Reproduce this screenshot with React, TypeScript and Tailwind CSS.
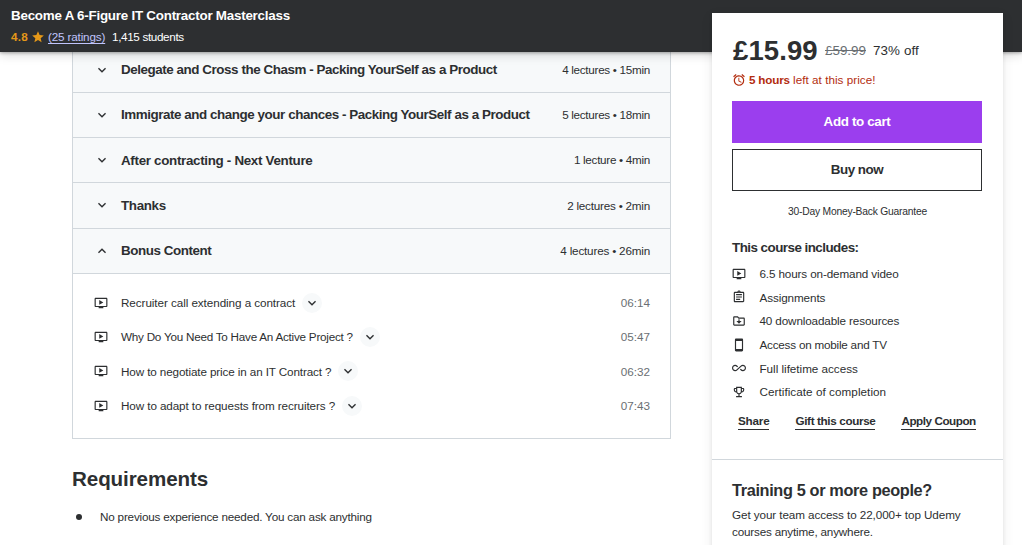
import React from "react";
import {
	MdAlarm,
	MdAllInclusive,
	MdExpandLess,
	MdExpandMore,
	MdOutlineAssignment,
	MdOutlineEmojiEvents,
	MdOutlineOndemandVideo,
	MdOutlineSmartphone,
	MdStar,
} from "react-icons/md";

interface Section {
	title: string;
	meta: string;
	titleSpacing: string;
	metaSpacing: string;
	open?: boolean;
}

const sections: Section[] = [
	{
		title: "Delegate and Cross the Chasm - Packing YourSelf as a Product",
		meta: "4 lectures • 15min",
		titleSpacing: "tracking-[-0.44px]",
		metaSpacing: "tracking-[-0.29px]",
	},
	{
		title: "Immigrate and change your chances - Packing YourSelf as a Product",
		meta: "5 lectures • 18min",
		titleSpacing: "tracking-[-0.44px]",
		metaSpacing: "tracking-[-0.29px]",
	},
	{
		title: "After contracting - Next Venture",
		meta: "1 lecture • 4min",
		titleSpacing: "tracking-[-0.32px]",
		metaSpacing: "tracking-[-0.29px]",
	},
	{
		title: "Thanks",
		meta: "2 lectures • 2min",
		titleSpacing: "tracking-[-0.35px]",
		metaSpacing: "tracking-[-0.22px]",
	},
	{
		title: "Bonus Content",
		meta: "4 lectures • 26min",
		titleSpacing: "tracking-[-0.43px]",
		metaSpacing: "tracking-[-0.19px]",
		open: true,
	},
];

const lessons = [
	{
		title: "Recruiter call extending a contract",
		time: "06:14",
		spacing: "tracking-[-0.07px]",
	},
	{
		title: "Why Do You Need To Have An Active Project ?",
		time: "05:47",
		spacing: "tracking-[-0.24px]",
	},
	{
		title: "How to negotiate price in an IT Contract ?",
		time: "06:32",
		spacing: "tracking-[-0.12px]",
	},
	{
		title: "How to adapt to requests from recruiters ?",
		time: "07:43",
		spacing: "tracking-[-0.1px]",
	},
];

const FolderDownload: React.FC<{ className?: string }> = ({ className }) => (
	<svg viewBox="0 0 24 24" fill="currentColor" className={className}>
		<path d="M20 6h-8l-2-2H4c-1.1 0-2 .9-2 2v12c0 1.1.9 2 2 2h16c1.1 0 2-.9 2-2V8c0-1.1-.9-2-2-2zm0 12H4V6h5.200l2 2H20v10zM11 9h2v3h3.500L12 16.500 7.500 12H11z" />
	</svg>
);

const includes = [
	{
		icon: MdOutlineOndemandVideo,
		label: "6.5 hours on-demand video",
		spacing: "tracking-[-0.13px]",
	},
	{
		icon: MdOutlineAssignment,
		label: "Assignments",
		spacing: "tracking-[-0.1px]",
	},
	{
		icon: FolderDownload,
		label: "40 downloadable resources",
		spacing: "tracking-[-0.13px]",
	},
	{
		icon: MdOutlineSmartphone,
		label: "Access on mobile and TV",
		spacing: "tracking-[-0.22px]",
	},
	{
		icon: MdAllInclusive,
		label: "Full lifetime access",
		spacing: "tracking-[-0.02px]",
	},
	{
		icon: MdOutlineEmojiEvents,
		label: "Certificate of completion",
		spacing: "tracking-[0.05px]",
	},
];

const Header: React.FC = () => (
	<header className="relative z-10 h-[52px] bg-[#2d2f31] pl-[11px] shadow-[0_1px_3px_rgba(0,0,0,0.3),0_3px_10px_rgba(0,0,0,0.15)]">
		<h1 className="pt-[7px] text-[13.4px] leading-[18px] font-bold tracking-[-0.24px] text-white">
			Become A 6-Figure IT Contractor Masterclass
		</h1>
		<div className="mt-[3px] flex h-[18px] items-center text-[11.7px] text-white">
			<span className="w-[20px] font-bold tracking-[0.2px] text-[#e59819]">4.8</span>
			<MdStar className="h-[14px] w-[14px] text-[#e59819]" />
			<a className="ml-[3px] w-[64px] tracking-[-0.16px] text-[#c0c4fc] underline underline-offset-2">
				(25 ratings)
			</a>
			<span className="tracking-[-0.35px]">1,415 students</span>
		</div>
	</header>
);

const Curriculum: React.FC = () => (
	<div className="-mt-[4.5px] border border-t-0 border-[#d1d7dc]">
		{sections.map((section) => {
			const Arrow = section.open ? MdExpandLess : MdExpandMore;
			return (
				<div
					key={section.title}
					className="flex h-[45.25px] items-center border-b border-[#d1d7dc] bg-[#f7f9fa] pr-[20px] pl-[21px]"
				>
					<Arrow className="h-4 w-4" />
					<h3
						className={`ml-[11px] flex-1 pt-[1px] text-[13.4px] font-bold whitespace-nowrap ${section.titleSpacing}`}
					>
						{section.title}
					</h3>
					<span className={`text-[11.7px] ${section.metaSpacing}`}>{section.meta}</span>
				</div>
			);
		})}
		<ul className="pt-[12px] pr-[20px] pb-[15px] pl-[20px]">
			{lessons.map((lesson) => (
				<li key={lesson.title} className="flex h-[34.3px] items-center text-[11.7px]">
					<MdOutlineOndemandVideo className="ml-[0.5px] h-[14px] w-[14px]" />
					<span className={`ml-[13.5px] ${lesson.spacing}`}>{lesson.title}</span>
					<span className="ml-[7px] flex h-[20px] w-[20px] items-center justify-center rounded-full bg-[#f7f9fa]">
						<MdExpandMore className="h-4 w-4" />
					</span>
					<span className="ml-auto text-[#6a6f73]">{lesson.time}</span>
				</li>
			))}
		</ul>
	</div>
);

const Sidebar: React.FC = () => (
	<aside className="relative z-20 -mt-[39px] ml-[41px] h-[560px] w-[291px] bg-white shadow-[0_2px_4px_rgba(0,0,0,0.08),0_4px_12px_rgba(0,0,0,0.08)]">
		<div className="h-[447px] border-b border-[#d1d7dc] px-[20px] pt-[22px]">
			<div className="flex h-[32px] items-center">
				<span className="w-[93px] pl-[1px] text-[27.5px] font-bold tracking-[0.1px]">
					£15.99
				</span>
				<span className="w-[48px] text-[13.4px] text-[#6a6f73] line-through">
					£59.99
				</span>
				<span className="text-[13.4px] tracking-[0.1px]">73% off</span>
			</div>
			<div className="mt-[3px] flex h-[20px] items-center text-[11.7px] text-[#b32d0f]">
				<MdAlarm className="mr-[3px] h-[14px] w-[14px]" />
				<span className="tracking-[0.03px]">
					<b className="tracking-[-0.2px]">5 hours</b> left at this price!
				</span>
			</div>
			<button className="mt-[11px] h-[42px] w-[250px] bg-[#9b3eee] pt-[1px] text-[13.4px] font-bold tracking-[-0.35px] text-white">
				Add to cart
			</button>
			<button className="mt-[6px] h-[42px] w-[250px] border border-[#2d2f31] pt-[1px] text-[13.4px] font-bold tracking-[-0.5px]">
				Buy now
			</button>
			<p className="mt-[13px] text-center text-[10.3px] leading-[16px] tracking-[-0.22px]">
				30-Day Money-Back Guarantee
			</p>
			<h2 className="mt-[19px] text-[13.4px] leading-[18px] font-bold tracking-[-0.53px]">
				This course includes:
			</h2>
			<ul className="mt-[5px]">
				{includes.map(({ icon: Icon, label, spacing }) => (
					<li key={label} className="flex h-[23.67px] items-center text-[11.7px]">
						<Icon className="h-[14px] w-[14px]" />
						<span className={`ml-[13.5px] ${spacing}`}>{label}</span>
					</li>
				))}
			</ul>
			<div className="mt-[9px] flex gap-[26px] pl-[6px] text-[11.7px] leading-[16px] font-bold whitespace-nowrap">
				<a className="border-b border-[#2d2f31] tracking-[-0.2px]">Share</a>
				<a className="border-b border-[#2d2f31] tracking-[-0.36px]">Gift this course</a>
				<a className="border-b border-[#2d2f31] tracking-[-0.46px]">Apply Coupon</a>
			</div>
		</div>
		<div className="px-[20px] pt-[20px]">
			<h2 className="text-[16.3px] leading-[20px] font-bold tracking-[-0.35px]">
				Training 5 or more people?
			</h2>
			<p className="mt-[6px] text-[11.7px] leading-[17px] tracking-[-0.09px]">
				Get your team access to 22,000+ top Udemy
				<br />
				<span className="tracking-[-0.18px]">courses anytime, anywhere.</span>
			</p>
		</div>
	</aside>
);

export default function App() {
	return (
		<div className="h-[545px] w-[1022px] overflow-hidden bg-white font-['Liberation_Sans',Arial,sans-serif] text-[#2d2f31]">
			<Header />
			<div className="flex items-start">
				<main className="ml-[72px] w-[599px]">
					<Curriculum />
					<h2 className="mt-[27px] text-[20.6px] leading-[26px] font-bold tracking-[-0.1px]">
						Requirements
					</h2>
					<ul className="mt-[15px]">
						<li className="flex h-[20px] items-center text-[11.7px]">
							<span className="ml-[4px] h-[6px] w-[6px] rounded-full bg-[#2d2f31]" />
							<span className="ml-[18px] tracking-[-0.2px]">
								No previous experience needed. You can ask anything
							</span>
						</li>
					</ul>
				</main>
				<Sidebar />
			</div>
		</div>
	);
}
